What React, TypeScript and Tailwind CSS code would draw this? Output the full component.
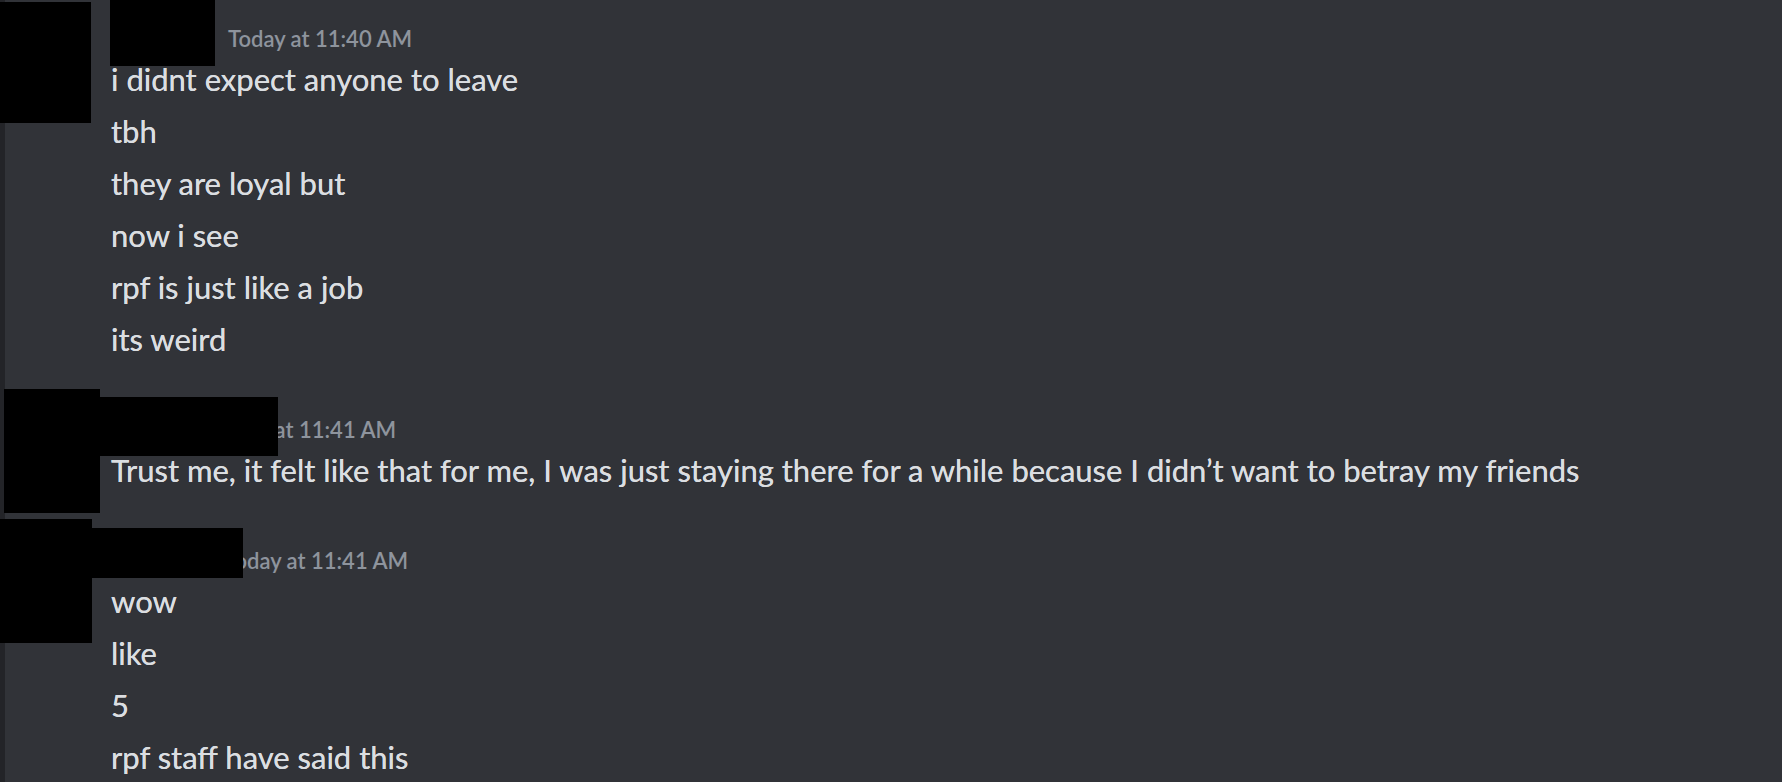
import React from "react";

const font = { fontFamily: "Lato, 'Noto Sans', 'Liberation Sans', sans-serif" };

function Line({ text }: { text: string }) {
  return (
    <div className="h-[52px] flex items-center pl-[111px] text-[31px] leading-none text-[#dbdee1] whitespace-nowrap [text-shadow:0_0_0.6px_#dbdee1]">
      {text}
    </div>
  );
}

function Header({ offset, time }: { offset: string; time: string }) {
  return (
    <div className="h-[32px] flex items-center pl-[111px] whitespace-nowrap">
      <span className={offset} />
      <span className="mt-[3px] text-[22px] leading-none font-semibold text-[#8e949d]">{time}</span>
    </div>
  );
}

export default function App() {
  return (
    <div className="relative w-full h-[782px] overflow-hidden bg-[#313338] flex" style={font}>
      <div className="w-[5px] shrink-0 bg-[#232428]" />
      <div className="flex-1 flex flex-col pt-[21px] -ml-[5px]">
        <div className="flex flex-col">
          <Header offset="inline-block w-[117px]" time="Today at 11:40 AM" />
          <Line text="i didnt expect anyone to leave" />
          <Line text="tbh" />
          <Line text="they are loyal but" />
          <Line text="now i see" />
          <Line text="rpf is just like a job" />
          <Line text="its weird" />
        </div>
        <div className="flex flex-col mt-[47px]">
          <Header offset="inline-block w-[101px]" time="Today at 11:41 AM" />
          <Line text="Trust me, it felt like that for me, I was just staying there for a while because I didn’t want to betray my friends" />
        </div>
        <div className="flex flex-col mt-[47px]">
          <Header offset="inline-block w-[113px]" time="Today at 11:41 AM" />
          <Line text="wow" />
          <Line text="like" />
          <Line text="5" />
          <Line text="rpf staff have said this" />
        </div>
      </div>

      {/* redaction boxes */}
      <div className="absolute left-0 top-[2px] w-[91px] h-[121px] bg-black" />
      <div className="absolute left-[110px] top-0 w-[105px] h-[66px] bg-black" />
      <div className="absolute left-[4px] top-[389px] w-[96px] h-[124px] bg-black" />
      <div className="absolute left-[100px] top-[397px] w-[178px] h-[59px] bg-black" />
      <div className="absolute left-0 top-[519px] w-[92px] h-[124px] bg-black" />
      <div className="absolute left-[92px] top-[528px] w-[151px] h-[50px] bg-black" />
    </div>
  );
}
